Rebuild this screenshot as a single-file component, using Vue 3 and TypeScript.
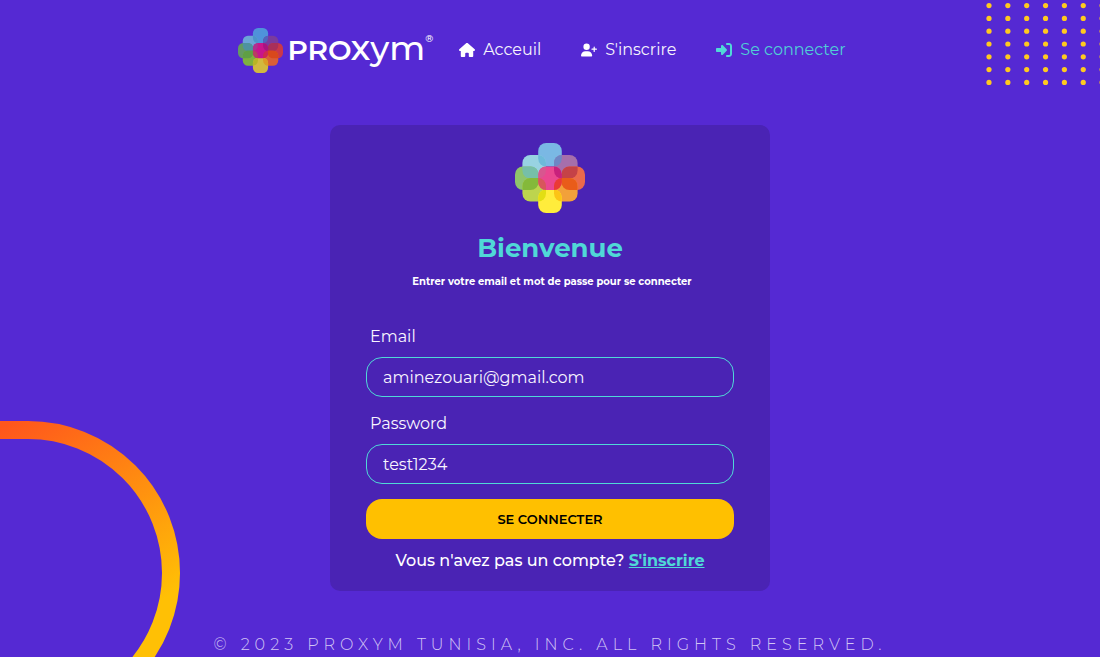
<script setup lang="ts">
import { ref } from 'vue'

type Tile = { name: string; x: number; y: number; bright: string; deep: string }
type Overlap = { a: string; b: string; bright: string; deep: string }

const tiles: Tile[] = [
  { name: 'top', x: 23.2, y: 0, bright: '#7ab8e4', deep: '#4f92da' },
  { name: 'upper-left', x: 7.4, y: 12, bright: '#98d3e2', deep: '#6ba4d6' },
  { name: 'upper-right', x: 39, y: 12, bright: '#a66fab', deep: '#7a3b9e' },
  { name: 'left', x: 0, y: 23.4, bright: '#8fc46b', deep: '#649a62' },
  { name: 'right', x: 46.4, y: 23.4, bright: '#eb6a4c', deep: '#c9384a' },
  { name: 'lower-left', x: 7.4, y: 35, bright: '#bdd44e', deep: '#7eb03f' },
  { name: 'lower-right', x: 39, y: 35, bright: '#f2a13a', deep: '#d95e38' },
  { name: 'bottom', x: 23.2, y: 46.4, bright: '#ffec3c', deep: '#d2b93f' },
  { name: 'center', x: 23.2, y: 23.4, bright: '#ea4790', deep: '#c8148c' },
]

const overlaps: Overlap[] = [
  { a: 'top', b: 'upper-left', bright: '#6dbada', deep: '#4b94cb' },
  { a: 'top', b: 'upper-right', bright: '#6e86c4', deep: '#5263bb' },
  { a: 'left', b: 'upper-left', bright: '#76bfa8', deep: '#4e92a0' },
  { a: 'right', b: 'upper-right', bright: '#c54247', deep: '#a92f5a' },
  { a: 'left', b: 'lower-left', bright: '#84b93a', deep: '#5f9f44' },
  { a: 'right', b: 'lower-right', bright: '#e95c1a', deep: '#d9481c' },
  { a: 'bottom', b: 'lower-left', bright: '#e2de13', deep: '#b8b526' },
  { a: 'bottom', b: 'lower-right', bright: '#fcc416', deep: '#dc9b25' },
  { a: 'center', b: 'upper-left', bright: '#d8568f', deep: '#b02f8e' },
  { a: 'center', b: 'upper-right', bright: '#c8217c', deep: '#a81480' },
  { a: 'center', b: 'lower-left', bright: '#d8565c', deep: '#b83d62' },
  { a: 'center', b: 'lower-right', bright: '#ea3a35', deep: '#cf2950' },
]

const tileByName = Object.fromEntries(tiles.map((t) => [t.name, t])) as Record<string, Tile>

const dots = Array.from({ length: 49 }, (_, i) => ({
  x: 4 + (i % 7) * 18.85,
  y: 5.6 + Math.floor(i / 7) * 12.8,
}))

const links = [
  {
    label: 'Acceuil',
    active: false,
    box: '0 0 576 512',
    path: 'M575.8 255.5c0 18-15 32.1-32 32.1h-32l.7 160.2c0 2.7-.2 5.4-.5 8.1V472c0 22.1-17.9 40-40 40H456c-1.1 0-2.2 0-3.3-.1c-1.4 .1-2.8 .1-4.2 .1H416 392c-22.1 0-40-17.9-40-40V448 384c0-17.7-14.3-32-32-32H256c-17.7 0-32 14.3-32 32v64 24c0 22.1-17.9 40-40 40H160 128.1c-1.5 0-3-.1-4.5-.2c-1.2 .1-2.4 .2-3.6 .2H104c-22.1 0-40-17.9-40-40V360c0-.9 0-1.9 .1-2.8V287.6H32c-18 0-32-14-32-32.1c0-9 3-17 10-24L266.4 8c7-7 15-8 22-8s15 2 21 7L564.8 231.5c8 7 12 15 11 24z',
  },
  {
    label: "S'inscrire",
    active: false,
    box: '0 0 640 512',
    path: 'M96 128a128 128 0 1 1 256 0A128 128 0 1 1 96 128zM0 482.3C0 383.8 79.8 304 178.3 304h91.4C368.2 304 448 383.8 448 482.3c0 16.4-13.3 29.7-29.7 29.7H29.7C13.3 512 0 498.7 0 482.3zM504 312V248H440c-13.3 0-24-10.7-24-24s10.7-24 24-24h64V136c0-13.3 10.7-24 24-24s24 10.7 24 24v64h64c13.3 0 24 10.7 24 24s-10.7 24-24 24H552v64c0 13.3-10.7 24-24 24s-24-10.7-24-24z',
  },
  {
    label: 'Se connecter',
    active: true,
    box: '0 0 512 512',
    path: 'M217.9 105.9L340.7 228.7c7.2 7.2 11.3 17.1 11.3 27.3s-4.1 20.1-11.3 27.3L217.9 406.1c-6.4 6.4-15 9.9-24 9.9c-18.7 0-33.9-15.2-33.9-33.9l0-62.1L32 320c-17.7 0-32-14.3-32-32l0-64c0-17.7 14.3-32 32-32l128 0 0-62.1c0-18.7 15.2-33.9 33.9-33.9c9 0 17.6 3.6 24 9.9zM352 416l64 0c17.7 0 32-14.3 32-32l0-256c0-17.7-14.3-32-32-32l-64 0c-17.7 0-32-14.3-32-32s14.3-32 32-32l64 0c53 0 96 43 96 96l0 256c0 53-43 96-96 96l-64 0c-17.7 0-32-14.3-32-32s14.3-32 32-32z',
  },
]

const email = ref('aminezouari@gmail.com')
const password = ref('test1234')
</script>

<template>
  <div class="page">
    <svg class="dots" viewBox="0 0 115 88" aria-hidden="true">
      <circle v-for="(d, i) in dots" :key="i" :cx="d.x" :cy="d.y" r="2.6" fill="#ffc91f" />
    </svg>
    <svg class="arc" viewBox="0 0 182 238" aria-hidden="true">
      <defs>
        <linearGradient id="arc-fill" gradientUnits="userSpaceOnUse" x1="0" y1="10" x2="125" y2="205">
          <stop offset="0" stop-color="#ff561c" />
          <stop offset="1" stop-color="#ffc005" />
        </linearGradient>
      </defs>
      <path d="M-10 11H28A143 143 0 0 1 28 297" fill="none" stroke="url(#arc-fill)" stroke-width="18" />
    </svg>

    <header class="header">
      <a class="brand" href="#">
        <svg class="brand-mark" viewBox="0 0 70 70" aria-hidden="true">
          <defs>
            <clipPath v-for="t in tiles" :id="'tile-' + t.name" :key="t.name">
              <rect :x="t.x" :y="t.y" width="23.6" height="23.6" rx="8" />
            </clipPath>
          </defs>
          <rect
            v-for="t in tiles" :key="t.name" :x="t.x" :y="t.y"
            width="23.6" height="23.6" rx="8" :fill="t.deep"
          />
          <rect
            v-for="o in overlaps" :key="o.a + o.b" :x="tileByName[o.a].x" :y="tileByName[o.a].y"
            width="23.6" height="23.6" rx="8" :fill="o.deep" :clip-path="`url(#tile-${o.b})`"
          />
        </svg>
        <span class="brand-name">PROX<span class="brand-tail">ym</span></span>
        <span class="brand-reg">®</span>
      </a>
      <nav class="nav">
        <a v-for="l in links" :key="l.label" href="#" class="nav-link" :class="{ active: l.active }">
          <svg class="nav-icon" :viewBox="l.box" aria-hidden="true">
            <path :d="l.path" fill="currentColor" />
          </svg>
          <span class="nav-label">{{ l.label }}</span>
        </a>
      </nav>
    </header>

    <main class="card">
      <svg class="card-mark" viewBox="0 0 70 70" aria-hidden="true">
        <rect
          v-for="t in tiles" :key="t.name" :x="t.x" :y="t.y"
          width="23.6" height="23.6" rx="8" :fill="t.bright"
        />
        <rect
          v-for="o in overlaps" :key="o.a + o.b" :x="tileByName[o.a].x" :y="tileByName[o.a].y"
          width="23.6" height="23.6" rx="8" :fill="o.bright" :clip-path="`url(#tile-${o.b})`"
        />
      </svg>
      <h1 class="title">Bienvenue</h1>
      <p class="subtitle">Entrer votre email et mot de passe pour se connecter</p>
      <form class="form" @submit.prevent>
        <label class="label" for="email">Email</label>
        <input id="email" v-model="email" class="field" type="text" />
        <label class="label" for="password">Password</label>
        <input id="password" v-model="password" class="field" type="text" />
        <button class="submit" type="submit">SE CONNECTER</button>
      </form>
      <p class="signup">Vous n'avez pas un compte? <a href="#">S'inscrire</a></p>
    </main>

    <footer class="footer">© 2023 PROXYM TUNISIA, INC. ALL RIGHTS RESERVED.</footer>
  </div>
</template>

<style>
body {
  margin: 0;
  background: #5529d3;
}
</style>

<style scoped>
.page {
  position: relative;
  box-sizing: border-box;
  min-height: 100vh;
  overflow: hidden;
  display: flex;
  flex-direction: column;
  align-items: center;
  background: #5529d3;
  color: #fff;
  font-family: Montserrat, Inter, "Open Sans", sans-serif;
  font-size: 16px;
  line-height: 24px;
}
.dots {
  position: absolute;
  top: 0;
  right: 0;
  width: 115px;
  height: 88px;
}
.arc {
  position: absolute;
  left: 0;
  bottom: 0;
  width: 182px;
  height: 238px;
}
.header {
  position: relative;
  display: flex;
  align-items: center;
  justify-content: center;
  gap: 26px;
  height: 100px;
  padding-right: 16px;
}
.brand {
  display: flex;
  align-items: center;
  color: #fff;
  text-decoration: none;
}
.brand-mark {
  width: 45px;
  height: 45px;
  margin-right: 4px;
}
.brand-name {
  font-size: 28px;
  font-weight: 600;
  line-height: 44px;
}
.brand-tail {
  font-size: 34px;
  font-weight: 500;
  line-height: 28px;
}
.brand-reg {
  align-self: flex-start;
  font-size: 10px;
  font-weight: 500;
  line-height: 22px;
}
.nav {
  display: flex;
  gap: 40px;
}
.nav-link {
  display: flex;
  align-items: center;
  gap: 8px;
  color: #fff;
  text-decoration: none;
}
.nav-link.active {
  color: #50d8d7;
}
.nav-icon {
  width: 16px;
  height: 16px;
}
.nav-label {
  opacity: 0.95;
}
.card {
  position: relative;
  box-sizing: border-box;
  display: flex;
  flex-direction: column;
  align-items: center;
  width: 100%;
  max-width: 440px;
  margin-top: 25px;
  padding: 18px 36px;
  border-radius: 10px;
  background: #4a23b4;
}
.card-mark {
  width: 70px;
  height: 70px;
}
.title {
  margin: 18px 0 0;
  color: #50d8d7;
  font-size: 26px;
  font-weight: 700;
  line-height: 34px;
}
.subtitle {
  margin: 10px 0 0;
  padding-left: 4px;
  font-size: 10px;
  font-weight: 700;
  line-height: 14px;
}
.form {
  display: flex;
  flex-direction: column;
  align-self: stretch;
  margin-top: 36px;
}
.label {
  padding-left: 4px;
  margin-bottom: 8px;
  color: #f8f5ff;
}
.field {
  box-sizing: border-box;
  width: 100%;
  height: 40px;
  margin: 0 0 15px;
  padding: 0 16px;
  border: 1px solid #50d8d7;
  border-radius: 16px;
  outline: none;
  background: transparent;
  color: #f8f5ff;
  font: inherit;
}
.submit {
  height: 40px;
  border: 0;
  border-radius: 16px;
  background: #ffc000;
  color: #000;
  font: inherit;
  font-size: 13px;
  font-weight: 600;
}
.signup {
  margin: 10px 0 0;
  font-weight: 500;
}
.signup a {
  color: #50d8d7;
  font-weight: 700;
}
.footer {
  position: relative;
  margin-top: 42px;
  color: #d2c5f5;
  font-weight: 300;
  letter-spacing: 5px;
  text-align: center;
}
</style>
